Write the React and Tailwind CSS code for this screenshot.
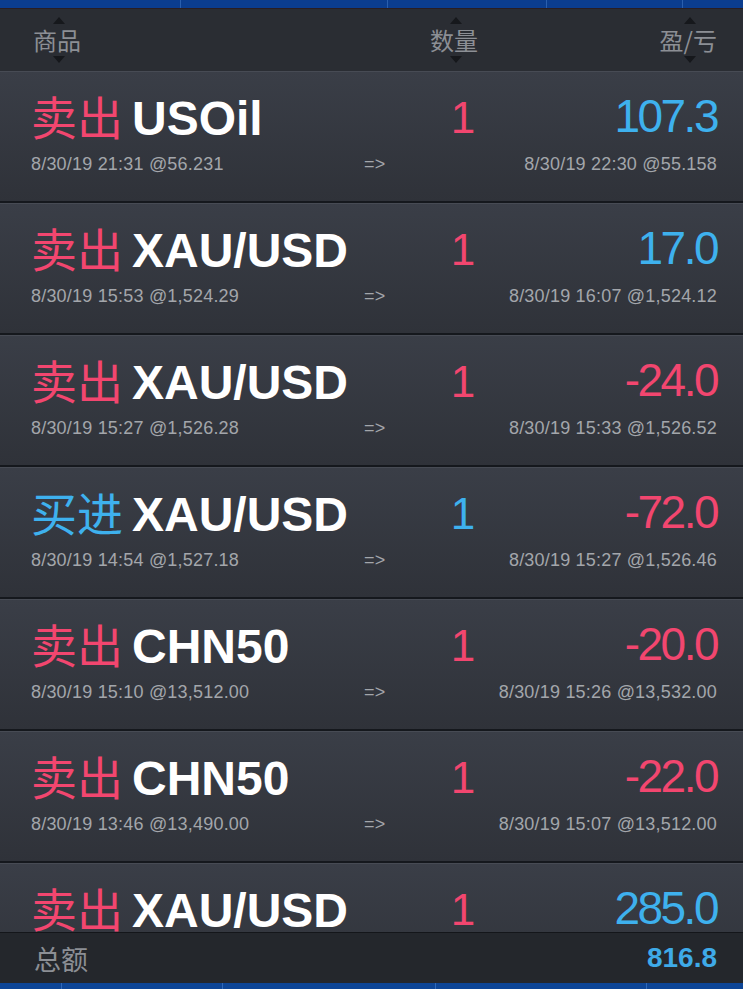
import React from "react";

const rows = [
  { side: "卖出", sym: "USOil", qty: "1", pl: "107.3", open: "8/30/19 21:31 @56.231", close: "8/30/19 22:30 @55.158" },
  { side: "卖出", sym: "XAU/USD", qty: "1", pl: "17.0", open: "8/30/19 15:53 @1,524.29", close: "8/30/19 16:07 @1,524.12" },
  { side: "卖出", sym: "XAU/USD", qty: "1", pl: "-24.0", open: "8/30/19 15:27 @1,526.28", close: "8/30/19 15:33 @1,526.52" },
  { side: "买进", sym: "XAU/USD", qty: "1", pl: "-72.0", open: "8/30/19 14:54 @1,527.18", close: "8/30/19 15:27 @1,526.46" },
  { side: "卖出", sym: "CHN50", qty: "1", pl: "-20.0", open: "8/30/19 15:10 @13,512.00", close: "8/30/19 15:26 @13,532.00" },
  { side: "卖出", sym: "CHN50", qty: "1", pl: "-22.0", open: "8/30/19 13:46 @13,490.00", close: "8/30/19 15:07 @13,512.00" },
  { side: "卖出", sym: "XAU/USD", qty: "1", pl: "285.0", open: "", close: "" },
];

const CJK = { fontFamily: '"Noto Sans CJK SC", "Noto Sans", sans-serif' };
const LIB = { fontFamily: '"Liberation Sans", Arial, sans-serif' };

function SortLabel({ children }) {
  return (
    <div className="flex flex-col items-center">
      <svg width="12" height="7" viewBox="0 0 12 7" className="block ml-[4px]">
        <polygon points="6,0 12,7 0,7" fill="#16181c" />
      </svg>
      <div className="text-[24px] leading-[30px] text-[#8c8f95] my-[1px]" style={CJK}>{children}</div>
      <svg width="12" height="7" viewBox="0 0 12 7" className="block ml-[4px]">
        <polygon points="0,0 12,0 6,7" fill="#16181c" />
      </svg>
    </div>
  );
}

function Row({ r }) {
  const sideColor = r.side === "买进" ? "text-[#3eb1ee]" : "text-[#f2466f]";
  const plColor = r.pl.startsWith("-") ? "text-[#f2466f]" : "text-[#3eb1ee]";
  return (
    <div className="shrink-0 h-[132px] border-t border-[#474b54] border-b-2 border-b-[#15181d] bg-linear-to-b from-[#3a3e47] to-[#2f3239] pl-[31px] pr-[26px] pt-[19px]">
      <div className="h-[50px] grid grid-cols-[410px_44px_1fr] items-start" style={LIB}>
        <div className="leading-[48px] whitespace-nowrap">
          <span className={`text-[46px] ${sideColor}`} style={CJK}>{r.side}</span>
          <span className="text-[48px] font-bold text-white ml-[9px]">{r.sym}</span>
        </div>
        <div className={`text-center text-[44px] leading-[44px] mt-[5px] ${sideColor}`}>{r.qty}</div>
        <div className={`text-right text-[46px] leading-[44px] mt-[3px] tracking-[-2.5px] ${plColor}`}>{r.pl}</div>
      </div>
      <div className="grid grid-cols-[333px_auto_1fr] mt-[14px] text-[18px] leading-[18px] tracking-[0.2px] text-[#a3a6ab]" style={LIB}>
        <div className="whitespace-nowrap">{r.open}</div>
        <div>{r.open ? "=>" : ""}</div>
        <div className="text-right whitespace-nowrap">{r.close}</div>
      </div>
    </div>
  );
}

export default function App() {
  return (
    <div className="w-[743px] h-[989px] overflow-hidden flex flex-col bg-[#2a2d33]">
      {/* top blue strip */}
      <div className="h-[9px] shrink-0 flex bg-[#0b3d8f] border-b border-[#2a1e22]">
        <div className="w-[181px] border-r border-[#2a5fae]" />
        <div className="w-[207px] border-r border-[#2a5fae]" />
        <div className="w-[159px] border-r border-[#2a5fae]" />
        <div className="w-[136px] border-r border-[#2a5fae]" />
        <div className="flex-1" />
      </div>
      {/* header */}
      <div className="h-[62px] shrink-0 bg-[#2a2d33] grid grid-cols-[376px_90px_1fr] items-center pl-[33px] pr-[26px]">
        <div className="justify-self-start"><SortLabel>商品</SortLabel></div>
        <div className="justify-self-center"><SortLabel>数量</SortLabel></div>
        <div className="justify-self-end"><SortLabel>盈/亏</SortLabel></div>
      </div>
      {/* list */}
      <div className="flex-1 min-h-0 overflow-hidden flex flex-col">
        {rows.map((r, i) => (
          <Row key={i} r={r} />
        ))}
      </div>
      {/* footer */}
      <div className="h-[51px] shrink-0 bg-[#24272c] border-t border-[#14161a] flex items-center justify-between pl-[34px] pr-[26px]">
        <div className="text-[27px] text-[#8c8f95] leading-none" style={CJK}>总额</div>
        <div className="text-[28px] font-bold text-[#3eaae8] leading-none" style={LIB}>816.8</div>
      </div>
      {/* bottom blue strip */}
      <div className="h-[6px] shrink-0 flex bg-[#0d4596]">
        <div className="w-[62px] border-r border-[#2f68b8]" />
        <div className="w-[161px] border-r border-[#2f68b8]" />
        <div className="w-[213px] border-r border-[#2f68b8]" />
        <div className="w-[211px] border-r border-[#2f68b8]" />
        <div className="flex-1" />
      </div>
    </div>
  );
}
